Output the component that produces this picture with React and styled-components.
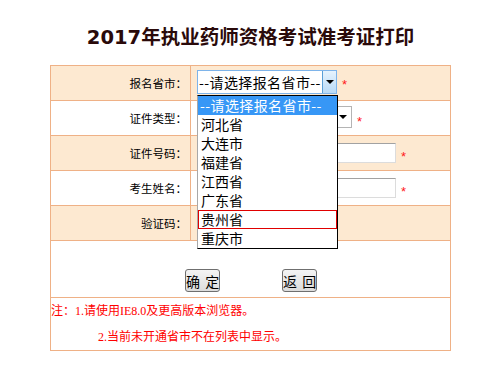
import React from "react";
import styled, { createGlobalStyle } from "styled-components";

const Global = createGlobalStyle`
  html, body { margin: 0; padding: 0; background: #ffffff; }
  body { font-family: "Noto Sans CJK SC", sans-serif; }
`;

const BORDER = "#efb186";
const PEACH = "#fde9d1";

const Page = styled.div`
  width: 401px;
  margin-left: 50px;
`;

const Title = styled.h1`
  margin: 0;
  padding-top: 24px;
  height: 65px;
  line-height: 28px;
  text-align: center;
  font-family: "DejaVu Sans", "Noto Sans CJK SC", sans-serif;
  font-size: 19.5px;
  font-weight: 700;
  color: #2a0a0a;
  box-sizing: border-box;
  white-space: nowrap;
`;

const Table = styled.div`
  border: 1px solid ${BORDER};
  box-sizing: border-box;
  width: 401px;
`;

const Row = styled.div`
  display: flex;
  height: 34px;
  border-bottom: 1px solid ${BORDER};
  background: ${(p) => (p.$shade ? PEACH : "#ffffff")};
`;

const Label = styled.div`
  width: 140px;
  box-sizing: border-box;
  border-right: 1px solid ${BORDER};
  display: flex;
  align-items: center;
  justify-content: flex-end;
  padding-right: 3px;
  font-size: 11.5px;
  color: #000;
`;

const Value = styled.div`
  flex: 1;
  display: flex;
  align-items: center;
  padding-left: 6px;
`;

const SelectWrap = styled.div`
  position: relative;
  margin-bottom: ${(p) => p.$lift || 0}px;
`;

const SelectBox = styled.div`
  width: ${(p) => p.$w}px;
  height: ${(p) => p.$h}px;
  box-sizing: border-box;
  display: flex;
  align-items: center;
  background: #fff;
  border: 1px solid ${(p) => (p.$focused ? "#7eb4ea" : "#b4b4b4")};
  font-family: "Noto Sans CJK SC", sans-serif;
  font-size: 14px;
  color: #000;
`;

const SelectText = styled.span`
  flex: 1;
  padding-left: 1px;
  white-space: nowrap;
  overflow: hidden;
  letter-spacing: 0.4px;
`;

const DropButton = styled.span`
  width: 14px;
  align-self: stretch;
  display: flex;
  align-items: center;
  justify-content: center;
  box-sizing: border-box;
  background: ${(p) =>
    p.$focused ? "linear-gradient(#e6f3fd, #b8daf7)" : "#ffffff"};
  border-left: ${(p) => (p.$focused ? "1px solid #5a9fd6" : "none")};
  margin: ${(p) => (p.$focused ? "0" : "0 1px 0 0")};
`;

const Triangle = styled.span`
  width: 0;
  height: 0;
  border-left: 4px solid transparent;
  border-right: 4px solid transparent;
  border-top: 4px solid #000;
`;

const Dropdown = styled.ul`
  position: absolute;
  top: 100%;
  left: 0;
  width: 141px;
  margin: 1px 0 0;
  padding: 0;
  list-style: none;
  background: #fff;
  border: 1px solid #000;
  border-left-color: #a8a8a8;
  box-sizing: border-box;
  z-index: 10;
  font-family: "Noto Sans CJK SC", sans-serif;
  font-size: 14px;
`;

const Option = styled.li`
  height: 19px;
  line-height: 19px;
  padding-left: ${(p) => (p.$active ? 2 : 3)}px;
  box-sizing: border-box;
  white-space: nowrap;
  letter-spacing: ${(p) => (p.$active ? 0.4 : 0)}px;
  color: ${(p) => (p.$active ? "#fff" : "#000")};
  background: ${(p) => (p.$active ? "#3797f6" : "#fff")};
  outline: ${(p) => (p.$hover ? "1px solid #e00000" : "none")};
  outline-offset: -1px;
  position: relative;
`;

const TextInput = styled.div`
  width: ${(p) => p.$w}px;
  height: 20px;
  box-sizing: border-box;
  background: #fff;
  border: 1px solid #dcdcdc;
  border-top-color: #a2a2a2;
  border-left-color: #c4c4c4;
`;

const Star = styled.span`
  color: #ff1a1a;
  font-family: "Liberation Sans", sans-serif;
  font-size: 13px;
  line-height: 13px;
  margin-left: 5px;
  margin-top: 6px;
  margin-bottom: ${(p) => p.$lift || 0}px;
`;

const ButtonRow = styled.div`
  height: 57px;
  display: flex;
  justify-content: center;
  align-items: flex-end;
  gap: 62px;
  padding-bottom: 5px;
  padding-left: 1px;
  box-sizing: border-box;
  border-bottom: 1px solid ${BORDER};
`;

const Button = styled.button`
  width: 35px;
  height: 23px;
  padding: 0;
  margin: 0;
  border: 1px solid #6f6f6f;
  border-radius: 3px;
  background: linear-gradient(#f4f4f4, #dcdcdc);
  font-family: "Noto Sans CJK SC", sans-serif;
  font-size: 14px;
  color: #000;
  white-space: pre;
  word-spacing: 2px;
  line-height: 20px;
`;

const NoteRow = styled.div`
  height: 52px;
  font-family: "Liberation Serif", "Noto Sans CJK SC", serif;
  font-size: 12px;
  color: #ff0000;
  line-height: 26px;
`;

const NoteLine = styled.div`
  padding-left: ${(p) => p.$indent || 0}px;
  white-space: nowrap;
`;

const provinces = ["河北省", "大连市", "福建省", "江西省", "广东省", "贵州省", "重庆市"];

export default function App() {
  return (
    <>
      <Global />
      <Page>
        <Title>2017年执业药师资格考试准考证打印</Title>
        <Table>
          <Row $shade>
            <Label>报名省市：</Label>
            <Value>
              <SelectWrap $lift={3}>
                <SelectBox $w={140} $h={24} $focused>
                  <SelectText>--请选择报名省市--</SelectText>
                  <DropButton $focused>
                    <Triangle />
                  </DropButton>
                </SelectBox>
                <Dropdown>
                  <Option $active>--请选择报名省市--</Option>
                  {provinces.map((p) => (
                    <Option key={p} $hover={p === "贵州省"}>
                      {p}
                    </Option>
                  ))}
                </Dropdown>
              </SelectWrap>
              <Star $lift={3}>*</Star>
            </Value>
          </Row>
          <Row>
            <Label>证件类型：</Label>
            <Value>
              <SelectWrap $lift={3}>
                <SelectBox $w={155} $h={22}>
                  <SelectText />
                  <DropButton>
                    <Triangle />
                  </DropButton>
                </SelectBox>
              </SelectWrap>
              <Star>*</Star>
            </Value>
          </Row>
          <Row $shade>
            <Label>证件号码：</Label>
            <Value>
              <TextInput $w={199} />
              <Star>*</Star>
            </Value>
          </Row>
          <Row>
            <Label>考生姓名：</Label>
            <Value>
              <TextInput $w={199} />
              <Star>*</Star>
            </Value>
          </Row>
          <Row $shade>
            <Label>验证码：</Label>
            <Value>
              <TextInput $w={90} />
            </Value>
          </Row>
          <ButtonRow>
            <Button>确 定</Button>
            <Button>返 回</Button>
          </ButtonRow>
          <NoteRow>
            <NoteLine>注：1.请使用IE8.0及更高版本浏览器。</NoteLine>
            <NoteLine $indent={47}>2.当前未开通省市不在列表中显示。</NoteLine>
          </NoteRow>
        </Table>
      </Page>
    </>
  );
}
